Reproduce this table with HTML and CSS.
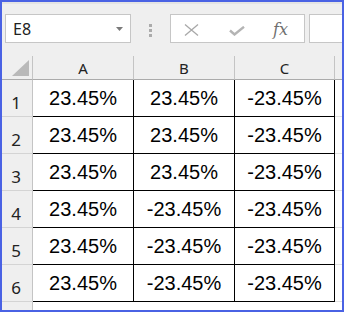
FILE: index.html
```html
<!DOCTYPE html>
<html>
<head>
<meta charset="utf-8">
<link rel="stylesheet" href="styles.css">
</head>
<body>
<div class="frame">
  <div class="toolbar">
    <div class="namebox">
      <span class="name">E8</span>
      <svg class="caret" width="7" height="4" viewBox="0 0 7 4"><path d="M0 0H7L3.5 4Z" fill="#7a7a7a"/></svg>
    </div>
    <div class="dots"><i></i><i></i><i></i></div>
    <div class="fbar">
      <svg class="ico-x" width="15" height="12" viewBox="0 0 15 12"><path d="M1 0.5L14 11.5M14 0.5L1 11.5" stroke="#a8a8a8" stroke-width="1.3" fill="none"/></svg>
      <svg class="ico-check" width="16" height="10" viewBox="0 0 16 10"><path d="M1 4.5L5.5 8.5L15 0.8" stroke="#b4b4b4" stroke-width="2.4" fill="none"/></svg>
      <span class="fx">fx</span>
    </div>
    <div class="finput"></div>
  </div>
  <div class="sheet">
    <div class="corner"><svg width="17" height="16" viewBox="0 0 17 16"><path d="M17 0V16H0Z" fill="#b9b9b9"/></svg></div>
    <div class="colhead">A</div>
    <div class="colhead">B</div>
    <div class="colhead">C</div>
    <div class="colhead last"></div>

    <div class="rowhead">1</div><div class="cell">23.45%</div><div class="cell">23.45%</div><div class="cell">-23.45%</div><div class="cell rest"></div>
    <div class="rowhead">2</div><div class="cell">23.45%</div><div class="cell">23.45%</div><div class="cell">-23.45%</div><div class="cell rest"></div>
    <div class="rowhead">3</div><div class="cell">23.45%</div><div class="cell">23.45%</div><div class="cell">-23.45%</div><div class="cell rest"></div>
    <div class="rowhead">4</div><div class="cell">23.45%</div><div class="cell">-23.45%</div><div class="cell">-23.45%</div><div class="cell rest"></div>
    <div class="rowhead">5</div><div class="cell">23.45%</div><div class="cell">-23.45%</div><div class="cell">-23.45%</div><div class="cell rest"></div>
    <div class="rowhead">6</div><div class="cell">23.45%</div><div class="cell">-23.45%</div><div class="cell">-23.45%</div><div class="cell rest"></div>

    <div class="rowhead blank"></div><div class="empty"></div><div class="empty"></div><div class="empty"></div><div class="empty"></div>
  </div>
</div>
</body>
</html>
```
FILE: styles.css
```css
* { box-sizing: border-box; }
html, body { margin: 0; padding: 0; }
body { width: 344px; height: 312px; overflow: hidden; background: #fff; }

.frame {
  width: 344px;
  height: 312px;
  border: 2px solid #4a62e4;
  background: #fff;
  display: flex;
  flex-direction: column;
  overflow: hidden;
}

.toolbar {
  height: 54px;
  flex: none;
  background: #efefef;
  display: flex;
  align-items: flex-start;
  padding: 12px 0 0 3px;
  border-top: 2px solid #e4e4e4;
}

.namebox {
  width: 126px;
  height: 29px;
  margin-top: -2px;
  border: 1px solid #c6c6c6;
  background: #fff;
  display: flex;
  align-items: center;
  justify-content: space-between;
  padding: 0 7px 0 7px;
}
.name {
  font-family: "Noto Sans", "Open Sans", sans-serif;
  font-size: 16px;
  color: #222;
}
.caret { margin-top: 1px; }

.dots {
  margin-left: 18px;
  margin-top: 8px;
  width: 3px;
  display: flex;
  flex-direction: column;
  gap: 2px;
}
.dots i { display: block; width: 3px; height: 3px; background: #ababab; }

.fbar {
  margin-left: 18px;
  margin-top: -2px;
  width: 135px;
  height: 29px;
  border: 1px solid #c6c6c6;
  background: #fff;
  display: flex;
  align-items: center;
  padding-left: 13px;
}
.ico-x { margin-top: 3px; }
.ico-check { margin-left: 30px; margin-top: 5px; }
.fx {
  margin-left: 28px;
  font-family: "DejaVu Serif", "Liberation Serif", serif;
  font-style: italic;
  font-size: 16px;
  color: #6f6f6f;
  margin-top: 1px;
}

.finput {
  margin-left: 4px;
  margin-top: -2px;
  flex: 1;
  height: 29px;
  border: 1px solid #c6c6c6;
  border-right: none;
  background: #fff;
}

.sheet {
  flex: 1;
  display: grid;
  grid-template-columns: 31px 101px 101px 100px 1fr;
  grid-template-rows: 24px repeat(6, 37px) 1fr;
}

.corner {
  background: #efefef;
  border-right: 1px solid #c4c4c4;
  border-bottom: 1px solid #ababab;
  display: flex;
  justify-content: flex-end;
  align-items: flex-end;
  padding: 0 3px 3px 0;
}

.colhead {
  background: #efefef;
  border-right: 1px solid #c4c4c4;
  border-bottom: 1px solid #ababab;
  display: flex;
  align-items: center;
  justify-content: center;
  font-family: "Noto Sans", "Open Sans", sans-serif;
  font-size: 15px;
  color: #222;
  padding-top: 1px;
}
.colhead.last { border-right: none; }

.rowhead {
  background: #efefef;
  border-right: 1px solid #c4c4c4;
  border-bottom: 1px solid #d4d4d4;
  display: flex;
  align-items: flex-end;
  justify-content: center;
  padding: 0 2px 4px 0;
  font-family: "Noto Sans", "Open Sans", sans-serif;
  font-size: 17px;
  line-height: 18px;
  color: #222;
}
.rowhead.blank { border-bottom: none; }

.cell {
  border-right: 1px solid #000;
  border-bottom: 1px solid #000;
  display: flex;
  align-items: center;
  justify-content: center;
  font-family: "Liberation Sans", Arial, sans-serif;
  font-size: 20px;
  color: #000;
}
.cell.rest { border-right: none; border-bottom: 1px solid #e2e2e2; }

.empty { background: #fff; }
```
